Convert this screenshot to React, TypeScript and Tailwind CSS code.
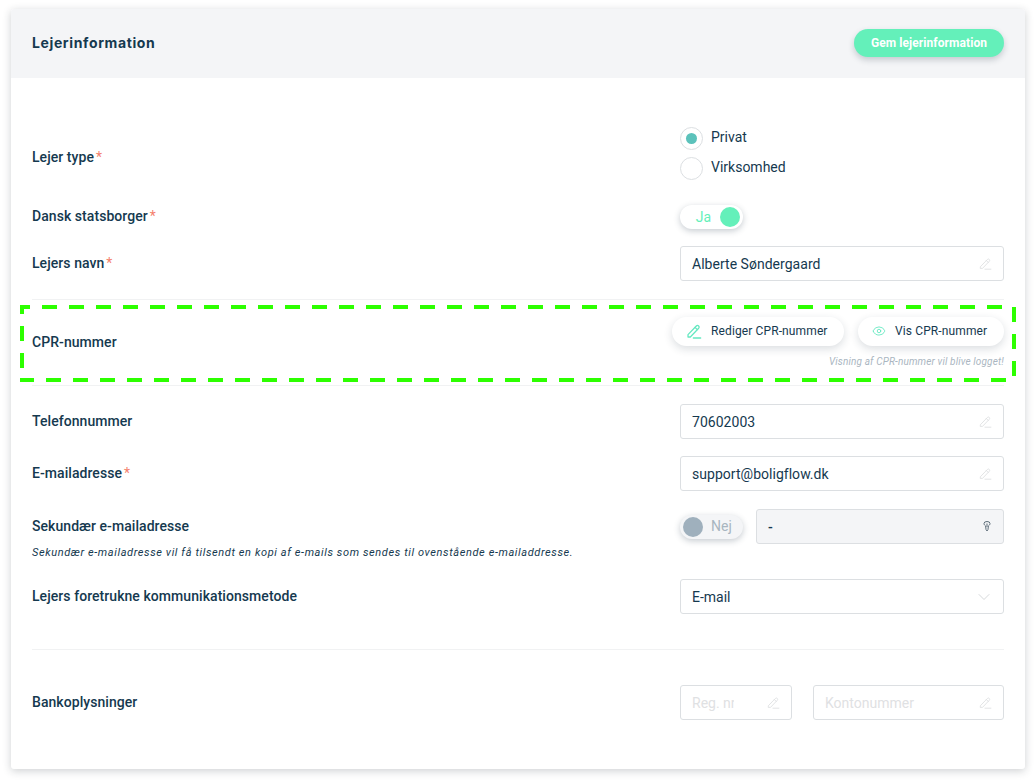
import React from "react";
import { Eye, ChevronDown } from "lucide-react";

function Pen({ size = 13, strokeWidth = 1.4, className = "" }: { size?: number; strokeWidth?: number; className?: string }) {
  return (
    <svg width={size} height={size} viewBox="0 0 24 24" fill="none" stroke="currentColor" strokeWidth={strokeWidth} strokeLinejoin="round" strokeLinecap="round" className={className}>
      <path d="M3 17.500 15.500 4.500a2.400 2.400 0 0 1 3.500 3.400L6.500 21H3z" />
      <path d="M13.500 6.500 17 10" />
      <path d="M11 22.500h11" />
    </svg>
  );
}

function Key() {
  return (
    <svg width="8" height="11" viewBox="0 0 8 11" fill="none" stroke="#5f6f7b" strokeWidth="1">
      <path d="M1 2.500a3 2 0 0 1 6 0c0 1.300-1 2-1.600 2.400L5 8.500 4 10 3 8.500l-.4-3.600C2 4.500 1 3.800 1 2.500z" />
      <path d="M4 2.500v3.500" />
    </svg>
  );
}

function Field({ value, placeholder, clip = false, className = "" }: { value?: string; placeholder?: string; clip?: boolean; className?: string }) {
  return (
    <div className={`h-[35px] flex items-center justify-between pl-[11px] pr-[11px] border border-[#dcdfe2] rounded-[3px] bg-white ${className}`}>
      {value ? (
        <span className="text-[14px] tracking-[0.03px] text-[#15394f] pt-[2px]">{value}</span>
      ) : (
        <span className={`text-[14px] text-[#dfe1e3] pt-[2px] whitespace-nowrap ${clip ? "w-[42px] overflow-hidden" : ""}`}>{placeholder}</span>
      )}
      <Pen className="text-[#d9dbdd]" />
    </div>
  );
}

function Label({ text, required = false, className = "" }: { text: string; required?: boolean; className?: string }) {
  return (
    <div className={`text-[14px] font-medium tracking-[0.06px] leading-[20px] text-[#15394f] ${className}`}>
      {text}
      {required && <span className="text-[#f4816d] font-normal ml-[2px]">*</span>}
    </div>
  );
}

function Radio({ checked, text }: { checked?: boolean; text: string }) {
  return (
    <div className="flex items-center gap-[8px] h-[23px]">
      <span className="w-[23px] h-[23px] rounded-full border border-[#dcdfe2] bg-white flex items-center justify-center">
        {checked && <span className="w-[11px] h-[11px] rounded-full bg-[#5cc2bb]" />}
      </span>
      <span className="text-[14px] text-[#15394f] -mt-[3px]">{text}</span>
    </div>
  );
}

function PillButton({ icon, text, className = "" }: { icon: React.ReactNode; text: string; className?: string }) {
  return (
    <div className={`h-[29px] pb-[1px] rounded-full bg-white shadow-[0_3px_8px_rgba(30,50,70,0.16)] flex items-center text-[12px] tracking-[0.12px] text-[#15394f] ${className}`}>
      {icon}
      {text}
    </div>
  );
}

export default function App() {
  return (
    <div className="relative w-[1036px] h-[781px] bg-white overflow-hidden font-['Roboto',sans-serif]">
      <div className="ml-[11px] mr-[11px] pt-[9px]">
        <div className="rounded-[3px] bg-white shadow-[0_2px_8px_rgba(30,40,50,0.22)] overflow-hidden">
          <div className="h-[69px] bg-[#f4f5f7] flex items-center justify-between pl-[21px] pr-[21px] pb-[1px]">
            <h1 className="-mt-[1px] font-['Inter',sans-serif] text-[14px] font-bold tracking-[0.62px] text-[#15394f]">Lejerinformation</h1>
            <div className="w-[150px] h-[28px] rounded-full bg-[#64f0ba] shadow-[0_3px_6px_rgba(30,50,70,0.22)] flex items-center justify-center text-[12px] font-bold tracking-[0.08px] text-white">
              Gem lejerinformation
            </div>
          </div>

          <div className="px-[21px] pt-[49px] pb-[49px]">
            <div className="flex justify-between h-[53px]">
              <Label text="Lejer type" required className="pt-[20px]" />
              <div className="w-[324px] flex flex-col gap-[7px]">
                <Radio checked text="Privat" />
                <Radio text="Virksomhed" />
              </div>
            </div>

            <div className="flex justify-between h-[24px] mt-[25px]">
              <Label text="Dansk statsborger" required className="pt-[1px]" />
              <div className="w-[324px]">
                <div className="w-[63px] h-[24px] rounded-full bg-white shadow-[0_2px_6px_rgba(30,50,70,0.25)] flex items-center justify-end gap-[9px] pr-[3px]">
                  <span className="text-[14px] text-[#64f0ba]">Ja</span>
                  <span className="w-[20px] h-[20px] rounded-full bg-[#64f0ba]" />
                </div>
              </div>
            </div>

            <div className="flex justify-between h-[35px] mt-[17px]">
              <Label text="Lejers navn" required className="pt-[7px]" />
              <Field value="Alberte Søndergaard" className="w-[324px]" />
            </div>

            <div className="mt-[18px] border-t border-b border-[#f1f2f3] h-[87px] flex justify-between pt-[17px]">
              <Label text="CPR-nummer" className="pt-[15px]" />
              <div className="flex flex-col items-end">
                <div className="flex gap-[14px]">
                  <PillButton className="w-[172px] pl-[14px] gap-[9px]" icon={<Pen size={16} strokeWidth={1.9} className="text-[#64e8c0]" />} text="Rediger CPR-nummer" />
                  <PillButton className="w-[146px] pl-[14px] gap-[9px]" icon={<Eye size={14} strokeWidth={1.5} className="text-[#64e8c0]" />} text="Vis CPR-nummer" />
                </div>
                <p className="mt-[9px] text-[10px] italic tracking-[0.15px] leading-[14px] text-[#aab6c1]">Visning af CPR-nummer vil blive logget!</p>
              </div>
            </div>

            <div className="flex justify-between h-[35px] mt-[18px]">
              <Label text="Telefonnummer" className="pt-[7px]" />
              <Field value="70602003" className="w-[324px]" />
            </div>

            <div className="flex justify-between h-[35px] mt-[17px]">
              <Label text="E-mailadresse" required className="pt-[7px]" />
              <Field value="support@boligflow.dk" className="w-[324px]" />
            </div>

            <div className="mt-[18px]">
              <div className="flex justify-between h-[35px]">
                <Label text="Sekundær e-mailadresse" className="pt-[7px]" />
                <div className="w-[324px] flex items-center justify-between">
                  <div className="w-[63px] h-[24px] rounded-full bg-[#f4f5f7] shadow-[0_2px_6px_rgba(30,50,70,0.25)] flex items-center gap-[8px] pl-[3px]">
                    <span className="w-[20px] h-[20px] rounded-full bg-[#9fb0bd]" />
                    <span className="text-[14px] text-[#a8b5c0]">Nej</span>
                  </div>
                  <div className="w-[248px] h-[35px] flex items-center justify-between pl-[11px] pr-[12px] border border-[#dcdfe2] rounded-[3px] bg-[#f4f5f7]">
                    <span className="text-[14px] font-medium text-[#15394f] pt-[2px]">-</span>
                    <Key />
                  </div>
                </div>
              </div>
              <p className="pt-[1px] text-[11px] italic tracking-[0.61px] leading-[16px] text-[#15394f]">Sekundær e-mailadresse vil få tilsendt en kopi af e-mails som sendes til ovenstående e-mailaddresse.</p>
            </div>

            <div className="flex justify-between h-[35px] mt-[18px]">
              <Label text="Lejers foretrukne kommunikationsmetode" className="pt-[7px]" />
              <div className="w-[324px] h-[35px] flex items-center justify-between pl-[11px] pr-[9px] border border-[#dcdfe2] rounded-[3px] bg-white">
                <span className="text-[14px] text-[#15394f] pt-[2px]">E-mail</span>
                <ChevronDown size={20} strokeWidth={0.9} className="text-[#c8cccf]" />
              </div>
            </div>

            <div className="h-px bg-[#f1f2f3] mt-[35px]" />

            <div className="flex justify-between h-[35px] mt-[35px]">
              <Label text="Bankoplysninger" className="pt-[7px]" />
              <div className="w-[324px] flex justify-between">
                <Field placeholder="Reg. nr" clip className="w-[112px]" />
                <Field placeholder="Kontonummer" className="w-[191px]" />
              </div>
            </div>
          </div>
        </div>
      </div>

      <svg className="absolute left-0 top-0 pointer-events-none" width="1036" height="781" fill="none" stroke="#2dff00" strokeWidth="4">
        <path d="M20 307H30" />
        <path d="M42 307H1002" strokeDasharray="15 12" />
        <path d="M22 305V368" strokeDasharray="15 12" strokeDashoffset="6" />
        <path d="M20 380H1006" strokeDasharray="15 12" strokeDashoffset="1" />
        <path d="M1014 307V376" strokeDasharray="15 12" />
      </svg>
    </div>
  );
}
